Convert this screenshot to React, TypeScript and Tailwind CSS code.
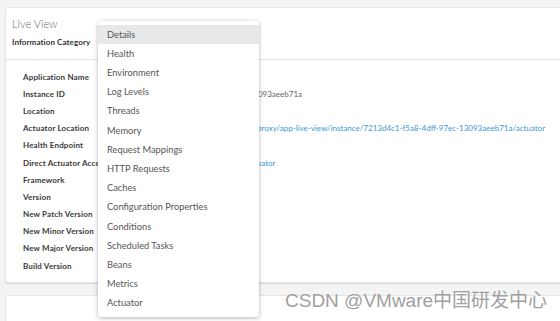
const ROWS: { label: string; value?: string; link?: boolean }[] = [
  { label: 'Application Name', value: 'sample-app' },
  { label: 'Instance ID', value: '7213d4c1-f5a8-4dff-97ec-13093aeeb71a' },
  { label: 'Location' },
  {
    label: 'Actuator Location',
    value: 'http://localhost.tap:5112/api/proxy/app-live-view/instance/7213d4c1-f5a8-4dff-97ec-13093aeeb71a/actuator',
    link: true,
  },
  { label: 'Health Endpoint' },
  { label: 'Direct Actuator Access', value: 'http://10.20.100.12:8081/actuator', link: true },
  { label: 'Framework', value: 'Spring' },
  { label: 'Version', value: '2.5.6' },
  { label: 'New Patch Version', value: '' },
  { label: 'New Minor Version', value: '' },
  { label: 'New Major Version', value: '' },
  { label: 'Build Version', value: '' },
]

const CATEGORIES = [
  'Details',
  'Health',
  'Environment',
  'Log Levels',
  'Threads',
  'Memory',
  'Request Mappings',
  'HTTP Requests',
  'Caches',
  'Configuration Properties',
  'Conditions',
  'Scheduled Tasks',
  'Beans',
  'Metrics',
  'Actuator',
]

export default function App() {
  return (
    <div
      className="relative h-[321px] w-[560px] overflow-hidden bg-[#f4f4f4] pl-[5px] pt-[7px]"
      style={{ fontFamily: 'Lato, "Open Sans", sans-serif' }}
    >
      {/* Live View card */}
      <div className="mr-[-20px] rounded-[3px] border border-[#e4e4e4] bg-white shadow-[0_1px_1px_rgba(0,0,0,0.12)]">
        <div className="flex h-[52px] flex-col border-b border-[#e2e2e2] px-[6px] pt-[8px]">
          <div className="text-[11px] font-light leading-[16px] text-[#666]">Live View</div>
          <div className="mt-[4px] text-[8px] font-bold leading-[12px] tracking-[0.1px] text-[#333]">
            Information Category
          </div>
        </div>

        <div className="flex flex-col px-[17px] pb-[8px] pt-[8px]">
          {ROWS.map((r) => (
            <div key={r.label} className="flex h-[17.2px] items-center">
              <span className="w-[130px] shrink-0 overflow-hidden whitespace-nowrap text-[8px] font-bold tracking-[0.15px] text-[#3a3a3a]">
                {r.label}
              </span>
              <span
                className={`whitespace-nowrap text-[8px] ${r.link ? 'text-[#3b98d4]' : 'text-[#666]'}`}
              >
                {r.value}
              </span>
            </div>
          ))}
        </div>
      </div>

      {/* next card */}
      <div className="mr-[-20px] mt-[12px] h-[60px] rounded-[3px] border border-[#e4e4e4] bg-white" />

      {/* category dropdown */}
      <div className="absolute left-[98px] top-[21px] w-[161px] rounded-[3px] bg-white py-[4px] shadow-[0_1px_4px_rgba(0,0,0,0.3)]">
        {CATEGORIES.map((c, i) => (
          <div
            key={c}
            className={`flex h-[19.2px] items-center pl-[9px] text-[9.3px] text-[#565656] ${
              i === 0 ? 'bg-[#e8e8e8]' : ''
            }`}
          >
            {c}
          </div>
        ))}
      </div>

      {/* watermark */}
      <div
        className="absolute left-[285px] top-[290px] text-[19px] leading-[22px] text-[#a0a0a0] [text-shadow:0_0_1px_#fff]"
        style={{ fontFamily: '"Liberation Sans", "Noto Sans CJK SC", sans-serif' }}
      >
        CSDN @VMware中国研发中心
      </div>
    </div>
  )
}
